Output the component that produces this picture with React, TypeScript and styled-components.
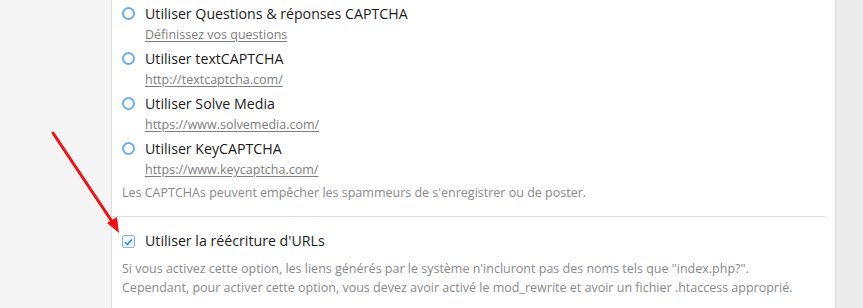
import React from "react";
import styled, { createGlobalStyle } from "styled-components";

const Global = createGlobalStyle`
  html, body { margin: 0; padding: 0; background: #f5f5f5; }
  body { font-family: "Open Sans", "Noto Sans", sans-serif; }
`;

const Page = styled.div`
  position: relative;
  display: flex;
  height: 308px;
  width: 863px;
  overflow: hidden;
`;

const LeftGutter = styled.div`
  width: 111px;
  background: #f5f5f5;
  border-right: 1px solid #dedede;
`;

const Panel = styled.div`
  flex: 1;
  background: #fff;
  padding-top: 3px;
`;

const RightGutter = styled.div`
  width: 27px;
  background: #ebebeb;
  border-left: 1px solid #dcdcdc;
`;

const Section = styled.div`
  padding: 0 10px;
`;

const Option = styled.div`
  display: grid;
  grid-template-columns: 13px 1fr;
  column-gap: 10px;
  align-items: start;
  & + & { margin-top: 3px; }
`;

const Radio = styled.span`
  box-sizing: border-box;
  width: 13px;
  height: 13px;
  margin-top: 4px;
  border: 2px solid #6aaef0;
  border-radius: 50%;
  background: #fff;
`;

const CheckBox = styled.span`
  box-sizing: border-box;
  width: 13px;
  height: 13px;
  margin-top: 5px;
  border: 1.5px solid #7cb7ef;
  border-radius: 2px;
  background: #eef5fd;
  display: flex;
  align-items: center;
  justify-content: center;
`;

const Label = styled.div`
  font-size: 14.2px;
  line-height: 22px;
  color: #1c1c1c;
`;

const Link = styled.a`
  grid-column: 2;
  font-size: 12.5px;
  line-height: 20px;
  color: #7d7d7d;
  text-decoration: underline;
  text-underline-offset: 2px;
  justify-self: start;
`;

const Hint = styled.div<{ $top?: number }>`
  font-size: 12.5px;
  line-height: 18px;
  color: #8a8a8a;
  margin-top: ${(p) => p.$top ?? 0}px;
`;

const Desc = styled.div`
  font-size: 12.5px;
  line-height: 19px;
  color: #8a8a8a;
  margin-top: 7px;
`;

const Separator = styled.hr`
  border: 0;
  border-top: 1px solid #dcdcdc;
  margin: 14px 10px 13px 0;
`;

const Arrow = styled.svg`
  position: absolute;
  left: 0;
  top: 0;
  pointer-events: none;
`;

const options = [
  { label: "Utiliser Questions & réponses CAPTCHA", link: "Définissez vos questions" },
  { label: "Utiliser textCAPTCHA", link: "http://textcaptcha.com/" },
  { label: "Utiliser Solve Media", link: "https://www.solvemedia.com/" },
  { label: "Utiliser KeyCAPTCHA", link: "https://www.keycaptcha.com/" },
];

export default function App() {
  return (
    <>
      <Global />
      <Page>
        <LeftGutter />
        <Panel>
          <Section>
            {options.map((o) => (
              <Option key={o.label}>
                <Radio />
                <Label>{o.label}</Label>
                <Link href="#">{o.link}</Link>
              </Option>
            ))}
            <Hint $top={4}>Les CAPTCHAs peuvent empêcher les spammeurs de s'enregistrer ou de poster.</Hint>
          </Section>
          <Separator />
          <Section>
            <Option>
              <CheckBox>
                <svg width="9" height="8" viewBox="0 0 9 8">
                  <path d="M1 4.2 L3.4 6.5 L8 1.5" fill="none" stroke="#3d8ee0" strokeWidth="1.6" />
                </svg>
              </CheckBox>
              <Label>Utiliser la réécriture d'URLs</Label>
            </Option>
            <Desc>
              Si vous activez cette option, les liens générés par le système n'incluront pas des noms tels que "index.php?".
              <br />
              Cependant, pour activer cette option, vous devez avoir activé le mod_rewrite et avoir un fichier .htaccess approprié.
            </Desc>
          </Section>
        </Panel>
        <RightGutter />
        <Arrow width="863" height="308" viewBox="0 0 863 308">
          <line x1="53" y1="133" x2="113" y2="223" stroke="#f01010" strokeWidth="3" strokeLinecap="round" />
          <polygon points="119,233 107,223 117,217" fill="#f01010" />
        </Arrow>
      </Page>
    </>
  );
}
